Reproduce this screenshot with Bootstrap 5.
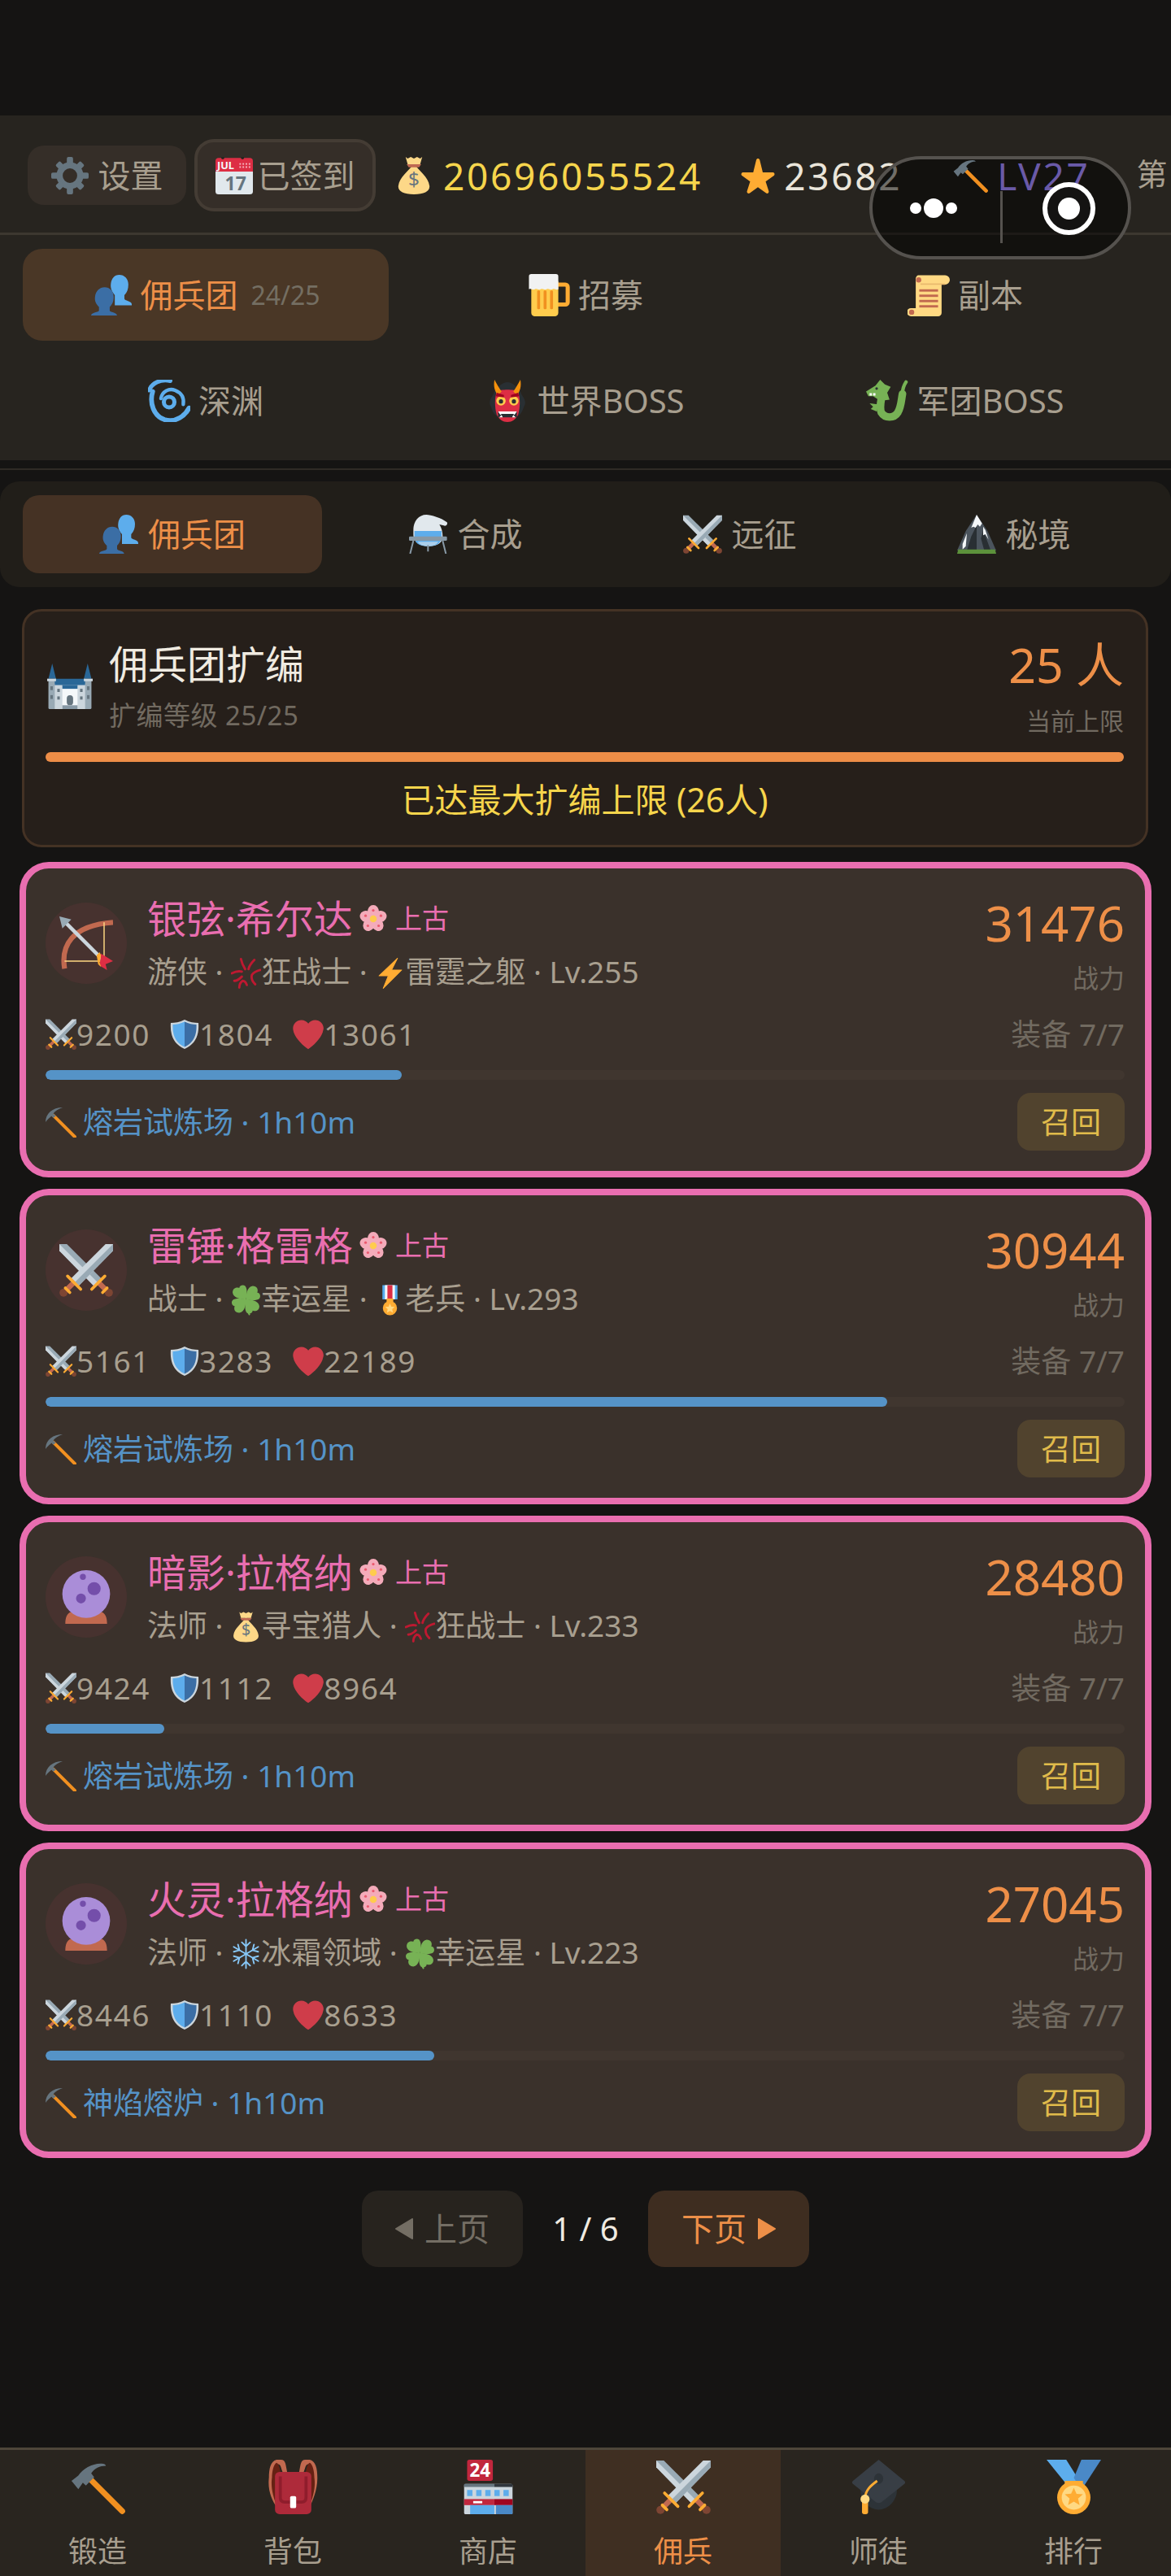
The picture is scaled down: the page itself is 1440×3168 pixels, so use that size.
<!DOCTYPE html>
<html lang="zh-CN">
<head>
  <meta charset="UTF-8">
  <title>佣兵团</title>
  <link href="https://cdn.jsdelivr.net/npm/bootstrap@5.3.3/dist/css/bootstrap.min.css" rel="stylesheet">
  <style>
    html, body { background: #151413; }
    body { width: 1440px; min-height: 3168px; margin: 0; position: relative; overflow-x: hidden; display: flex; flex-direction: column;
      font-family: "Noto Sans", "Noto Sans CJK SC", sans-serif; color: #a89f8f; }
    svg.ico { display: inline-block; flex: none; vertical-align: -0.2em; overflow: visible; }
    text { font-family: "Noto Sans", "Liberation Sans", sans-serif; }

    .game-head { margin-top: 142px; background: #27241f; height: 424px; }
    .top-bar { height: 147px; padding: 3px 0 0 34px; border-bottom: 3px solid #3d3830; white-space: nowrap; }
    .top-btn { height: 73px; width: 195px; background: #352e28; border-radius: 20px; font-size: 40px; line-height: 1; gap: 12px; color: #a89f8f; flex: none; }
    .top-btn.signed { height: 89px; width: 223px; margin-left: 10px; border: 4px solid #443c34; border-radius: 24px; gap: 6px; }
    .res { font-size: 46px; letter-spacing: 2.7px; line-height: 1; flex: none; }
    .res-gold { color: #f6d54c; margin-left: 13px; }
    .res-star { color: #eae5da; margin-left: 10px; }
    .res-lv { color: #6a5aa8; margin-left: 11px; position: relative; z-index: 2; }
    .res-floor { font-size: 38px; margin-left: 57px; line-height: 1; margin-top: -6px; flex: none; }
    .hammer-top { margin-left: 63px; position: relative; z-index: 2; }

    .nav-grid { display: grid; grid-template-columns: repeat(3, 450px); grid-auto-rows: 113px; gap: 17px 17px; padding: 17px 28px; }
    .nav-cell { font-size: 40px; gap: 10px; border-radius: 24px; line-height: 1; }
    .nav-cell.on { background: #4a3726; color: #ed8f48; }
    .nav-cell small { font-size: 32px; color: #746e62; margin-left: 6px; }
    .head-rule { height: 2px; margin-top: 10px; background: #2f2b26; }

    .sub-bar { margin-top: 14px; height: 130px; background: #211e19; border-radius: 24px; padding: 17px 28px; }
    .sub-cell { flex: 0 0 337px; font-size: 40px; gap: 12px; border-radius: 20px; line-height: 1; }
    .sub-cell.on { flex: 0 0 368px; margin-right: 8px; background: #453224; color: #ed8f48; }

    .expand-box { margin: 27px 28px 0 27px; height: 293px; background: #261f1a; border: 3px solid #443224; border-radius: 24px; padding: 35px 27px 0 26px; }
    .expand-title { font-size: 48px; line-height: 60px; color: #f0ebe1; }
    .expand-sub { font-size: 33px; letter-spacing: .5px; line-height: 40px; margin-top: 13px; color: #716a60; }
    .expand-num { font-size: 59px; line-height: 60px; color: #ed8f48; }
    .expand-cap { font-size: 30px; line-height: 26px; margin-top: 27px; color: #716a60; }
    .bar-orange { height: 12px; margin-top: 25px; background: #ed8d47; border-radius: 6px; }
    .expand-note { margin-top: 21px; font-size: 41px; line-height: 50px; color: #f6d54c; }
    .castle-ico { margin-right: 18px; }

    .hero-list { margin: 18px 24px 0; gap: 14px; }
    .hero-box { height: 388px; background: #3a312b; border: 8px solid #e96eb0; border-radius: 36px; padding: 32px 25px 0 24px; }
    .hero-top { height: 120px; }
    .avatar { width: 100px; height: 100px; flex: none; margin-right: 25px; background: #47322f; border-radius: 50%; }
    .hero-name { font-size: 48px; line-height: 60px; color: #e96eb0; white-space: nowrap; }
    .hero-tag { font-size: 33px; margin-left: 10px; }
    .hero-line { font-size: 37px; line-height: 60px; margin-top: 5px; white-space: nowrap; }
    .hero-power { font-size: 60px; line-height: 70px; color: #ed8f48; text-align: right; }
    .hero-power-cap { font-size: 32px; line-height: 40px; margin-top: 13px; color: #716a60; text-align: right; }
    .stat-row { height: 50px; margin-top: 27px; font-size: 37px; letter-spacing: 1.6px; }
    .stat-item { margin-right: 24px; }
    .stat-equip { letter-spacing: 0; font-size: 37px; color: #716a60; }
    .track { height: 12px; margin-top: 19px; background: #40362f; border-radius: 6px; }
    .track .progress-bar { background: #5593c7; border-radius: 6px; }
    .task-row { margin-top: 16px; height: 71px; font-size: 37px; color: #5593c7; }
    .recall { width: 132px; height: 71px; padding: 0; background: #51432e; border: 0; border-radius: 16px; font-size: 37px; color: #e0bb4b; }

    .pager { margin-top: 40px; }
    .page-btn { width: 198px; height: 94px; padding: 0; border: 0; border-radius: 20px; font-size: 40px; gap: 14px; }
    .page-btn.off { background: #27231e; color: #746e64; }
    .page-btn.next { background: #3e2d20; color: #ed8f48; }
    .page-num { width: 154px; text-align: center; font-size: 40px; color: #f0ebe1; }

    .tab-bar { margin-top: auto; height: 158px; background: #29251f; border-top: 3px solid #4e463a; }
    .tab-cell { height: 155px; padding-top: 12px; font-size: 36px; line-height: 50px; }
    .tab-cell svg { margin-bottom: 21px; }
    .tab-cell.on { background: #3f2f22; color: #ed8f48; }

    .capsule { position: absolute; left: 1069px; top: 192px; width: 322px; height: 127px; background: rgba(0,0,0,.52); border: 4px solid #55524e; border-radius: 64px; }
    .cap-dots { position: absolute; left: 46px; top: 50%; transform: translateY(-50%); gap: 3px; z-index: 3; }
    .cap-dots i { display: block; width: 14px; height: 14px; background: #fff; border-radius: 50%; }
    .cap-dots i.big { width: 24px; height: 24px; }
    .cap-sep { position: absolute; left: 157px; top: 39px; width: 3px; height: 64px; background: #55524e; z-index: 3; }
    .cap-ring { position: absolute; left: 209px; top: 28px; width: 65px; height: 65px; border: 6px solid #fff; border-radius: 50%; background: #141312; z-index: 3; }
    .cap-ring::after { content: ""; position: absolute; left: 13px; top: 13px; width: 27px; height: 27px; background: #fff; border-radius: 50%; }
  </style>
</head>
<body>
  <svg class="d-none" xmlns="http://www.w3.org/2000/svg">
    <symbol id="i-gear" viewBox="0 0 36 36"><g fill="#66757f"><path fill-rule="evenodd" d="M18 5a13 13 0 1 0 0 26 13 13 0 0 0 0-26zm0 6a7 7 0 1 1 0 14 7 7 0 0 1 0-14z"/><rect x="15" y="0" width="6" height="7" rx="1.5"/><rect x="15" y="29" width="6" height="7" rx="1.5"/><rect x="0" y="15" width="7" height="6" rx="1.5"/><rect x="29" y="15" width="7" height="6" rx="1.5"/><rect x="15" y="1" width="6" height="7" rx="1.5" transform="rotate(45 18 18)"/><rect x="15" y="1" width="6" height="7" rx="1.5" transform="rotate(135 18 18)"/><rect x="15" y="1" width="6" height="7" rx="1.5" transform="rotate(225 18 18)"/><rect x="15" y="1" width="6" height="7" rx="1.5" transform="rotate(315 18 18)"/></g></symbol>
    <symbol id="i-cal" viewBox="0 0 36 36"><path fill="#e1e8ed" d="M0 12h36v21a3 3 0 0 1-3 3H3a3 3 0 0 1-3-3z"/><path fill="#dd2e44" d="M0 4a3 3 0 0 1 3-3h30a3 3 0 0 1 3 3v10H0z"/><circle cx="26" cy="1" r="1.4" fill="#27241f"/><circle cx="7" cy="1" r="1.4" fill="#27241f"/><text x="1.5" y="12" font-size="10" font-weight="700" fill="#f5f8fa">JUL</text><g fill="#f7b6bf"><rect x="23" y="6" width="1.5" height="1.5"/><rect x="26" y="6" width="1.5" height="1.5"/><rect x="29" y="6" width="1.5" height="1.5"/><rect x="32" y="6" width="1.5" height="1.5"/><rect x="23" y="9" width="1.5" height="1.5"/><rect x="26" y="9" width="1.5" height="1.5"/><rect x="29" y="9" width="1.5" height="1.5"/><rect x="32" y="9" width="1.5" height="1.5"/></g><text x="9" y="32" font-size="18" font-weight="700" fill="#66757f">17</text></symbol>
    <symbol id="i-bag" viewBox="0 0 36 36"><path fill="#fdd888" d="M18 6C13 14 4 19 3 28c-.5 5 5 8 15 8s15.500-3 15-8c-1-9-10-14-15-22z"/><path fill="#bf6952" d="M11 7h14l-2 3H13z"/><path fill="#fdd888" d="M10 0l2 1.500L15 0l3 1.500L21 0l3 1.500L26 0l-2 7H12z"/><text x="18" y="28" text-anchor="middle" font-size="19" fill="#67757f">$</text></symbol>
    <symbol id="i-star" viewBox="0 0 36 36"><path fill="#ffac33" d="M27.300 35.900c-.4 0-.7-.1-1-.3L18 29.600l-8.200 6c-.6.4-1.500.4-2.100 0-.6-.5-.9-1.300-.6-2L10.200 24 2 18c-.6-.4-.9-1.200-.6-2 .2-.7.9-1.200 1.700-1.200h10.200l3.100-12.700c.2-.7.9-1.200 1.700-1.200s1.400.5 1.700 1.200l3.100 12.700H33c.8 0 1.400.5 1.700 1.200.2.700 0 1.500-.6 2l-8.300 6 3.100 9.600c.2.700 0 1.500-.6 2-.3.200-.7.300-1 .3z"/></symbol>
    <symbol id="i-hammer" viewBox="0 0 36 36"><path stroke="#f19020" stroke-width="3.800" stroke-linecap="round" d="M12 12l22 22"/><path fill="#66757f" d="M.5 14L5 10.500C8 6 14 2.500 20 2.600c2-.1 3 .6 3.200 1.400C19 4 16 5.500 13.500 9l2 2.500-5.500 5.500-2-1.800L5 19.500z"/></symbol>
    <symbol id="i-pick" viewBox="0 0 36 36"><path stroke="#f19020" stroke-width="3.800" stroke-linecap="round" d="M9 10l25 25"/><path fill="#66757f" d="M0 18C0 8 8 1 20 1c-5 2-9 4-11 7l3 3-3 2-2-2c-2 2-5 4-7 7z"/></symbol>
    <symbol id="i-busts" viewBox="0 0 36 36"><path fill="#5dadec" d="M25 0c4.500 0 8 3.500 8 8.500 0 4-1 7-3.500 9.500v3c0 2 6.500 2 6.500 5v1H21v-9c-2.500-3-4-6-3.500-10C18 3.500 20.500 0 25 0z"/><path fill="#3b6ea5" d="M12 11c4.500 0 8 3.500 8 8.500 0 4-1 6.500-3.500 9v3c0 2 6.500 1.500 6.500 4.500H0c0-3 7-2.500 7-4.500v-3C4.500 26 3 23.500 3.500 19.500 4 14.500 7.500 11 12 11z"/></symbol>
    <symbol id="i-beer" viewBox="0 0 36 36"><path fill="none" stroke="#ffac33" stroke-width="3.500" d="M24 9h8a2 2 0 0 1 2 2v13a2 2 0 0 1-2 2h-8"/><path fill="#ffcc4d" d="M3 6h23v27a3 3 0 0 1-3 3H6a3 3 0 0 1-3-3z"/><g fill="#f19020"><rect x="8" y="14" width="2.500" height="16" rx="1"/><rect x="13.500" y="14" width="2.500" height="16" rx="1"/><rect x="19" y="14" width="2.500" height="16" rx="1"/></g><path fill="#f1f2f2" d="M1 2a2 2 0 0 1 2-2h21a2 2 0 0 1 2 2v11c-2 1-3-1-5 0s-3-1-5 0-3-1-5 0-3-1-5 0-3-1-5 0z"/></symbol>
    <symbol id="i-scroll" viewBox="0 0 36 36"><path fill="#ffd983" d="M9 1h23a4 4 0 0 1 0 8h-3v24a3 3 0 0 1-3 3H3a3 3 0 0 1 0-7h4V4c0-1 1-3 2-3z"/><circle cx="9.500" cy="5" r="2.200" fill="#c1694f"/><circle cx="3.500" cy="32.500" r="2.200" fill="#c1694f"/><g fill="#c1694f"><rect x="10" y="13" width="16" height="2"/><rect x="10" y="17.500" width="16" height="2"/><rect x="10" y="22" width="16" height="2"/><rect x="10" y="26.500" width="16" height="2"/></g><rect x="11" y="8" width="21" height="1.200" fill="#e9b96e"/></symbol>
    <symbol id="i-swirl" viewBox="0 0 36 36"><g fill="none" stroke="#5dadec" stroke-linecap="round"><circle cx="18" cy="19" r="4.500" stroke-width="3.500"/><path stroke-width="3" d="M11 16c1-6 7-9 12-7 5 2 8 6 7 12"/><path stroke-width="3.500" d="M1 9C3 3 11-1 19 1"/><path stroke-width="4" d="M4 10C1 20 5 31 14 34c10 3 18-4 21-10"/></g></symbol>
    <symbol id="i-oni" viewBox="0 0 36 36"><path fill="#292f33" d="M18 2c4 0 6 3 8 4 3 2 3 5 5 8 2 3 3 6 1 9-1 3-2 6-5 8-3 3-6 5-9 5s-6-2-9-5c-3-2-4-5-5-8-2-3-1-6 1-9 2-3 2-6 5-8 2-1 4-4 8-4z"/><path fill="#dd2e44" d="M9 10c3-2 15-2 18 0 2 5 2 14 0 20-2 4-5 6-9 6s-7-2-9-6c-2-6-2-15 0-20z"/><path fill="#f4900c" d="M7 0c2 4 4 7 6 10l-3 3C7 10 6 5 7 0zm22 0c1 5 0 10-3 13l-3-3c2-3 4-6 6-10z"/><circle cx="12.500" cy="18" r="4" fill="#ffcc4d"/><circle cx="23.500" cy="18" r="4" fill="#ffcc4d"/><circle cx="12.500" cy="18.500" r="1.800" fill="#292f33"/><circle cx="23.500" cy="18.500" r="1.800" fill="#292f33"/><path fill="#a0041e" d="M8 14l7 1v-2L9 11zm20 0l-7 1v-2l6-2z"/><rect x="10" y="27" width="16" height="5" fill="#292f33"/><path fill="#fff" d="M10 27h16l-2 3-1-1H13l-1 1zM11 32l2-2 1 2zm14 0l-2-2-1 2z"/></symbol>
    <symbol id="i-dragon" viewBox="0 0 36 36"><path fill="none" stroke="#77b255" stroke-width="6.500" stroke-linecap="round" d="M14 10c-1 8-3 13-1 18 3 5 11 5 14 0 3-5 3-11 4-16"/><path fill="none" stroke="#77b255" stroke-width="3" stroke-linecap="round" d="M31 12c0-4 1-7 3-10"/><path fill="#77b255" d="M0 10l8-5 4-5 4 4 5 2-3 5 2 6-8 1-6-4H2zM3 20l7 1-1 6-5-2 2-2z"/><circle cx="9" cy="7.500" r="1.100" fill="#292f33"/><path fill="#fff" d="M3 11.500h2v2H3zm3 0h2v2H6z"/></symbol>
    <symbol id="i-flask" viewBox="0 0 36 36"><path fill="#e1e8ed" d="M4 14C4 6 9 0 16 0c4 0 14 3 19 7 1 2-1 4-3 3l-4-1c2 3 3 7 3 11 0 6-5 9-13 9S4 26 4 18z"/><path fill="#5dadec" d="M5 15h25v5c0 6-4 9-12.500 9S5 26 5 20z"/><path fill="#e1e8ed" d="M8 25h19c-2 3-5 4-9.500 4S10 28 8 25z" opacity=".6"/><g stroke="#8899a6" stroke-width="1.500" fill="none"><path d="M4 24L1 36M31 24l3 12M17.500 28v6"/></g><rect x="0" y="20" width="35" height="4" rx="1" fill="#8899a6"/></symbol>
    <symbol id="i-swords" viewBox="0 0 36 36"><path fill="#99aab5" d="M0 .5h5l23 23-5 5L0 5z"/><path fill="#ccd6dd" d="M0 .5l25.500 25.500-2.500 2.500L0 5z"/><path fill="#ccd6dd" d="M36 .5v4.500L13 28.500l-5-5L31 .5z"/><path fill="#99aab5" d="M36 .5L10.500 26 13 28.500 36 5z"/><path stroke="#c1694f" stroke-width="3.500" d="M10 26l-7 7M26 26l7 7"/><circle cx="2.800" cy="33.200" r="2.700" fill="#7d4533"/><circle cx="33.200" cy="33.200" r="2.700" fill="#7d4533"/><path stroke="#ffac33" stroke-width="2" stroke-linecap="round" d="M5.500 22l8.800 8.800M30.500 22l-8.800 8.800M4 30l3 3M32 30l-3 3"/></symbol>
    <symbol id="i-peak" viewBox="0 0 36 36"><path fill="#4b545d" d="M18 0l10 15 8 18H0l8-18z"/><path fill="#292f33" d="M18 10l-5 10-4 13h9zM24 14l-2 8 3 11h6z"/><path fill="#f5f8fa" d="M18 0l5 8-2 3-2-2-2 3-2-1-2 1zM5 27l4-10-1 12-3 3zM24 11l2 3 3 9-3-5-2 1z"/><path fill="#5c913b" d="M1 32h34l1 4H0z"/></symbol>
    <symbol id="i-castle" viewBox="0 0 36 36"><rect x="1" y="13" width="34" height="23" rx="1" fill="#99aab5"/><rect x="6" y="16" width="24" height="20" fill="#ccd6dd"/><path fill="#2a6797" d="M4 0l3 12H1zM32 0l3 12h-6zM6 12h24v5H6z"/><rect x="0" y="12" width="7" height="2" fill="#ccd6dd"/><rect x="29" y="12" width="7" height="2" fill="#ccd6dd"/><rect x="12" y="18" width="12" height="18" fill="#f5f8fa"/><path fill="#2a6797" d="M12 17h12v3H12z"/><rect x="15.500" y="25" width="5" height="8" rx="2.500" fill="#66757f"/><rect x="12" y="33" width="12" height="3" fill="#8899a6"/><g fill="#66757f"><rect x="2.500" y="18" width="2" height="3"/><rect x="2.500" y="25" width="2" height="3"/><rect x="31.500" y="18" width="2" height="3"/><rect x="31.500" y="25" width="2" height="3"/><rect x="8" y="20" width="2" height="2.500"/><rect x="8" y="26" width="2" height="2.500"/><rect x="26" y="20" width="2" height="2.500"/><rect x="26" y="26" width="2" height="2.500"/></g></symbol>
    <symbol id="i-bow" viewBox="0 0 36 36"><path fill="none" stroke="#c1694f" stroke-width="3.400" d="M3.500 35C1 20 8 6 36 4"/><path fill="none" stroke="#ffd983" stroke-width=".8" d="M30 4v26H3.500"/><path stroke="#ccd6dd" stroke-width="2.400" d="M2 2l29 29"/><path fill="#99aab5" d="M0 0l8 2-6 6z"/><path fill="#dd2e44" d="M28 25l8 5-5 2 1 4-5-3z"/><path fill="#ffac33" d="M25 26l2-2 1 2-1 5 1 3-2-2z"/></symbol>
    <symbol id="i-orb" viewBox="0 0 36 36"><path fill="#c1694f" d="M4 36c0-4 1-7 4-8 6 3 14 3 20 0 3 1 4 4 4 8z"/><circle cx="18" cy="16" r="16" fill="#aa8dd8"/><circle cx="15.800" cy="4.500" r="2" fill="#744eaa"/><circle cx="23.300" cy="12.400" r="4.400" fill="#744eaa"/><circle cx="14.500" cy="19" r="3.300" fill="#744eaa"/></symbol>
    <symbol id="i-bloom" viewBox="0 0 36 36"><g fill="#f4abba"><ellipse cx="18" cy="9" rx="7.500" ry="9"/><ellipse cx="18" cy="9" rx="7.500" ry="9" transform="rotate(72 18 18)"/><ellipse cx="18" cy="9" rx="7.500" ry="9" transform="rotate(144 18 18)"/><ellipse cx="18" cy="9" rx="7.500" ry="9" transform="rotate(216 18 18)"/><ellipse cx="18" cy="9" rx="7.500" ry="9" transform="rotate(288 18 18)"/></g><g fill="#ea596e"><circle cx="18" cy="7" r="1.700"/><circle cx="28" cy="14" r="1.700"/><circle cx="25" cy="27" r="1.700"/><circle cx="11" cy="27" r="1.700"/><circle cx="8" cy="14" r="1.700"/></g><circle cx="18" cy="18" r="4.500" fill="#ffcc4d"/></symbol>
    <symbol id="i-anger" viewBox="0 0 36 36"><g fill="none" stroke="#be1931" stroke-width="2.800" stroke-linecap="round"><path d="M12 1c1 5 3 9 5 12M28 2c-3 3-6 7-7 11"/><path d="M1 18c4-2 8-3 12-2M4 27c3 0 6-2 9-5"/><path d="M35 14c-4 1-8 3-10 6-1 4 1 8 4 11"/><path d="M10 35c0-3 1-6 4-8 2 0 4 2 5 5"/></g></symbol>
    <symbol id="i-bolt" viewBox="0 0 36 36"><path fill="#ffac33" stroke="#ffac33" stroke-width="1" stroke-linejoin="round" d="M27 0L5 21h11l-6 15 22-22H20z"/></symbol>
    <symbol id="i-clover" viewBox="0 0 36 36"><path stroke="#77b255" stroke-width="2" stroke-linecap="round" fill="none" d="M18 18c0 7 1 12 4 17"/><g fill="#77b255"><path d="M18 17C13 17 3 16 2 9c0-5 4-7 8-5.500C10 0 15-1 17 1c3 3 2 11 1 16z"/><path d="M18 17C13 17 3 16 2 9c0-5 4-7 8-5.500C10 0 15-1 17 1c3 3 2 11 1 16z" transform="rotate(90 18 17)"/><path d="M18 17C13 17 3 16 2 9c0-5 4-7 8-5.500C10 0 15-1 17 1c3 3 2 11 1 16z" transform="rotate(180 18 17)"/><path d="M18 17C13 17 3 16 2 9c0-5 4-7 8-5.500C10 0 15-1 17 1c3 3 2 11 1 16z" transform="rotate(270 18 17)"/></g></symbol>
    <symbol id="i-service" viewBox="0 0 36 36"><rect x="9" y="0" width="18" height="17" fill="#55acee"/><rect x="12" y="0" width="12" height="17" fill="#f5f8fa"/><rect x="15" y="0" width="6" height="17" fill="#dd2e44"/><rect x="14" y="16" width="8" height="5" fill="#ffac33"/><circle cx="18" cy="27.500" r="8.500" fill="#ffac33"/><path fill="#ffd983" d="M18 22l1.700 3.700 4 .4-3 2.700.9 4-3.600-2-3.600 2 .9-4-3-2.700 4-.4z"/></symbol>
    <symbol id="i-snow" viewBox="0 0 36 36"><g fill="none" stroke="#88c9f9" stroke-width="1.800" stroke-linecap="round"><path d="M18 1v34M13 4l5 5 5-5M13 32l5-5 5 5"/><g transform="rotate(60 18 18)"><path d="M18 1v34M13 4l5 5 5-5M13 32l5-5 5 5"/></g><g transform="rotate(120 18 18)"><path d="M18 1v34M13 4l5 5 5-5M13 32l5-5 5 5"/></g></g></symbol>
    <symbol id="i-shield" viewBox="0 0 36 36"><path fill="#ccd6dd" d="M18 0C12 3 6 4 1 4c-1 14 3 26 17 32 14-6 18-18 17-32-5 0-11-1-17-4z"/><path fill="#5dadec" d="M18 2.500C13 5 8 6 3.500 6 3 18 6 28 18 33.500z"/><path fill="#3b6ea5" d="M18 2.500C23 5 28 6 32.500 6 33 18 30 28 18 33.500z"/></symbol>
    <symbol id="i-heart" viewBox="0 0 36 36"><path fill="#cf3d4a" d="M35.900 11.200c0-5.400-4.400-9.800-9.800-9.800-3.300 0-6.200 1.600-8 4.100-1.800-2.500-4.700-4.100-8-4.100C4.700 1.400.3 5.800.3 11.200c0 .8.100 1.500.3 2.200C2 21.900 11.500 30.900 18 35.300c6.500-4.400 16-13.400 17.400-21.900.2-.7.5-1.400.5-2.200"/></symbol>
    <symbol id="i-pack" viewBox="0 0 36 36"><path fill="#c1694f" d="M2 12c0-6 1-11 5-12h3c3 0 3 3 4 8h-3c-1-2-1-5-3-5-2 1-2 6-2 11 0 6 1 11 3 15l-2 2C4 27 1 20 2 12zM34 12c0-6-1-11-5-12h-3c-3 0-3 3-4 8h3c1-2 1-5 3-5 2 1 2 6 2 11 0 6-1 11-3 15l2 2c2-4 5-11 5-19z"/><path fill="#662113" d="M4 12c0-4 1-9 3-10 2 1 2 4 3 7h-2c-1 5-2 12 0 20l-1 1C5 25 3 18 4 12zm28 0c0-4-1-9-3-10-2 1-2 4-3 7h2c1 5 2 12 0 20l1 1c2-5 4-12 3-18z"/><rect x="6" y="8" width="24" height="28" rx="3" fill="#ae2a3a"/><path fill="none" stroke="#8f1d2c" stroke-width="2" d="M9.500 11v14c0 2 1 3 3 3h11c2 0 3-1 3-3V11"/><rect x="16" y="24" width="4" height="8" rx="1" fill="#fff"/></symbol>
    <symbol id="i-shop" viewBox="0 0 36 36"><rect x="2" y="16" width="32" height="20" rx="1" fill="#ccd6dd"/><rect x="2" y="16" width="20" height="2" fill="#66757f"/><rect x="22" y="16" width="12" height="2" fill="#31373d"/><g fill="#5dadec"><rect x="4" y="20" width="3.500" height="4"/><rect x="10" y="20" width="3.500" height="4"/><rect x="16" y="20" width="3.500" height="4"/><rect x="22" y="20" width="3.500" height="4"/><rect x="28" y="20" width="3.500" height="4"/></g><rect x="2" y="26" width="20" height="4" fill="#c1273d"/><rect x="22" y="26" width="12" height="4" fill="#a0041e"/><rect x="8" y="27.300" width="6" height="1.500" fill="#fff"/><rect x="6" y="30" width="16" height="6" fill="#5dadec"/><rect x="23" y="30" width="11" height="6" fill="#4a89c7"/><rect x="4" y="0" width="17" height="14" rx="1.500" fill="#c1273d"/><text x="12.500" y="11.500" text-anchor="middle" font-size="12" font-weight="700" fill="#fff">24</text></symbol>
    <symbol id="i-cap" viewBox="0 0 36 36"><path fill="#2d3338" d="M6 18h24v6c0 5-5 12-12 12S6 29 6 24z" transform="translate(0 -3)"/><path fill="#383e45" d="M18 0l17 14c.7.6.7 1.500 0 2L20 28c-1 .8-3 .8-4 0L1 16c-.7-.5-.7-1.400 0-2z"/><ellipse cx="18" cy="12.500" rx="3" ry="3.500" fill="#2d3338"/><path fill="none" stroke="#ffac33" stroke-width="1.600" d="M17 14c-4 3-8 6-8 12"/><rect x="7" y="25" width="4" height="11" rx="1.500" fill="#ffac33"/><circle cx="9" cy="26" r="3" fill="#ffd983"/></symbol>
    <symbol id="i-medal" viewBox="0 0 36 36"><path fill="#5dadec" d="M0 0h13l10 16-6 5z"/><path fill="#4a89c7" d="M36 0H23l-5 12 5 8z"/><rect x="12" y="14" width="12" height="6" fill="#ffac33"/><ellipse cx="18" cy="25" rx="11" ry="11" fill="#ffac33"/><ellipse cx="18" cy="25" rx="8" ry="8" fill="#ffd983"/><path fill="#ffac33" d="M18 18.500l1.800 4 4.200.4-3.200 2.800 1 4.200-3.800-2.200-3.800 2.200 1-4.200-3.200-2.800 4.200-.4z"/></symbol>
  </svg>

  <header class="game-head">
    <div class="top-bar d-flex align-items-center">
      <div class="top-btn d-flex align-items-center justify-content-center"><svg class="ico" width="46" height="46"><use href="#i-gear"/></svg>设置</div>
      <div class="top-btn signed d-flex align-items-center justify-content-center"><svg class="ico" width="46" height="46"><use href="#i-cal"/></svg>已签到</div>
      <svg class="ico ms-4" width="46" height="48"><use href="#i-bag"/></svg>
      <span class="res res-gold">20696055524</span>
      <svg class="ico" style="margin-left:46px" width="44" height="44"><use href="#i-star"/></svg>
      <span class="res res-star">23682</span>
      <svg class="ico hammer-top" width="43" height="43"><use href="#i-hammer"/></svg>
      <span class="res res-lv">LV27</span>
      <span class="res-floor">第</span>
    </div>
    <div class="nav-grid">
      <div class="nav-cell on d-flex align-items-center justify-content-center"><svg class="ico" width="50" height="50"><use href="#i-busts"/></svg>佣兵团<small>24/25</small></div>
      <div class="nav-cell d-flex align-items-center justify-content-center"><svg class="ico" width="52" height="52"><use href="#i-beer"/></svg>招募</div>
      <div class="nav-cell d-flex align-items-center justify-content-center"><svg class="ico" width="52" height="52"><use href="#i-scroll"/></svg>副本</div>
      <div class="nav-cell d-flex align-items-center justify-content-center"><svg class="ico" width="52" height="52"><use href="#i-swirl"/></svg>深渊</div>
      <div class="nav-cell d-flex align-items-center justify-content-center"><svg class="ico" width="52" height="52"><use href="#i-oni"/></svg>世界BOSS</div>
      <div class="nav-cell d-flex align-items-center justify-content-center"><svg class="ico" width="52" height="52"><use href="#i-dragon"/></svg>军团BOSS</div>
    </div>
  </header>
  <div class="head-rule"></div>

  <div class="sub-bar d-flex">
    <div class="sub-cell on d-flex align-items-center justify-content-center"><svg class="ico" width="48" height="48"><use href="#i-busts"/></svg>佣兵团</div>
    <div class="sub-cell d-flex align-items-center justify-content-center"><svg class="ico" width="48" height="48"><use href="#i-flask"/></svg>合成</div>
    <div class="sub-cell d-flex align-items-center justify-content-center"><svg class="ico" width="48" height="48"><use href="#i-swords"/></svg>远征</div>
    <div class="sub-cell d-flex align-items-center justify-content-center"><svg class="ico" width="48" height="48"><use href="#i-peak"/></svg>秘境</div>
  </div>

  <section class="expand-box">
    <div class="d-flex align-items-start justify-content-between">
      <div class="d-flex align-items-center">
        <svg class="ico castle-ico" width="60" height="56"><use href="#i-castle"/></svg>
        <div>
          <div class="expand-title">佣兵团扩编</div>
          <div class="expand-sub">扩编等级 25/25</div>
        </div>
      </div>
      <div class="text-end">
        <div class="expand-num">25 人</div>
        <div class="expand-cap">当前上限</div>
      </div>
    </div>
    <div class="bar-orange"></div>
    <div class="expand-note text-center">已达最大扩编上限 (26人)</div>
  </section>

  <main class="hero-list d-flex flex-column">
    <article class="hero-box">
      <div class="hero-top d-flex align-items-center">
        <div class="avatar d-flex align-items-center justify-content-center"><svg class="ico" width="66" height="66"><use href="#i-bow"/></svg></div>
        <div class="flex-grow-1 align-self-start">
          <div class="hero-name d-flex align-items-center">银弦·希尔达<svg class="ico ms-2" width="34" height="34"><use href="#i-bloom"/></svg><span class="hero-tag">上古</span></div>
          <div class="hero-line">游侠 · <svg class="ico" width="37" height="38"><use href="#i-anger"/></svg>狂战士 · <svg class="ico" width="37" height="38"><use href="#i-bolt"/></svg>雷霆之躯 · Lv.255</div>
        </div>
        <div class="align-self-start">
          <div class="hero-power">31476</div>
          <div class="hero-power-cap">战力</div>
        </div>
      </div>
      <div class="stat-row d-flex align-items-center">
        <span class="stat-item d-flex align-items-center"><svg class="ico" width="38" height="38"><use href="#i-swords"/></svg>9200</span>
        <span class="stat-item d-flex align-items-center"><svg class="ico" width="36" height="38"><use href="#i-shield"/></svg>1804</span>
        <span class="stat-item d-flex align-items-center"><svg class="ico" width="38" height="38"><use href="#i-heart"/></svg>13061</span>
        <span class="stat-equip ms-auto">装备 7/7</span>
      </div>
      <div class="progress track"><div class="progress-bar" style="width:33%"></div></div>
      <div class="task-row d-flex align-items-center justify-content-between">
        <span class="d-flex align-items-center"><svg class="ico me-2" width="38" height="38"><use href="#i-pick"/></svg>熔岩试炼场 · 1h10m</span>
        <button class="btn recall" type="button">召回</button>
      </div>
    </article>

    <article class="hero-box">
      <div class="hero-top d-flex align-items-center">
        <div class="avatar d-flex align-items-center justify-content-center"><svg class="ico" width="66" height="66"><use href="#i-swords"/></svg></div>
        <div class="flex-grow-1 align-self-start">
          <div class="hero-name d-flex align-items-center">雷锤·格雷格<svg class="ico ms-2" width="34" height="34"><use href="#i-bloom"/></svg><span class="hero-tag">上古</span></div>
          <div class="hero-line">战士 · <svg class="ico" width="37" height="38"><use href="#i-clover"/></svg>幸运星 · <svg class="ico" width="37" height="38"><use href="#i-service"/></svg>老兵 · Lv.293</div>
        </div>
        <div class="align-self-start">
          <div class="hero-power">30944</div>
          <div class="hero-power-cap">战力</div>
        </div>
      </div>
      <div class="stat-row d-flex align-items-center">
        <span class="stat-item d-flex align-items-center"><svg class="ico" width="38" height="38"><use href="#i-swords"/></svg>5161</span>
        <span class="stat-item d-flex align-items-center"><svg class="ico" width="36" height="38"><use href="#i-shield"/></svg>3283</span>
        <span class="stat-item d-flex align-items-center"><svg class="ico" width="38" height="38"><use href="#i-heart"/></svg>22189</span>
        <span class="stat-equip ms-auto">装备 7/7</span>
      </div>
      <div class="progress track"><div class="progress-bar" style="width:78%"></div></div>
      <div class="task-row d-flex align-items-center justify-content-between">
        <span class="d-flex align-items-center"><svg class="ico me-2" width="38" height="38"><use href="#i-pick"/></svg>熔岩试炼场 · 1h10m</span>
        <button class="btn recall" type="button">召回</button>
      </div>
    </article>

    <article class="hero-box">
      <div class="hero-top d-flex align-items-center">
        <div class="avatar d-flex align-items-center justify-content-center"><svg class="ico" width="66" height="66"><use href="#i-orb"/></svg></div>
        <div class="flex-grow-1 align-self-start">
          <div class="hero-name d-flex align-items-center">暗影·拉格纳<svg class="ico ms-2" width="34" height="34"><use href="#i-bloom"/></svg><span class="hero-tag">上古</span></div>
          <div class="hero-line">法师 · <svg class="ico" width="37" height="38"><use href="#i-bag"/></svg>寻宝猎人 · <svg class="ico" width="37" height="38"><use href="#i-anger"/></svg>狂战士 · Lv.233</div>
        </div>
        <div class="align-self-start">
          <div class="hero-power">28480</div>
          <div class="hero-power-cap">战力</div>
        </div>
      </div>
      <div class="stat-row d-flex align-items-center">
        <span class="stat-item d-flex align-items-center"><svg class="ico" width="38" height="38"><use href="#i-swords"/></svg>9424</span>
        <span class="stat-item d-flex align-items-center"><svg class="ico" width="36" height="38"><use href="#i-shield"/></svg>1112</span>
        <span class="stat-item d-flex align-items-center"><svg class="ico" width="38" height="38"><use href="#i-heart"/></svg>8964</span>
        <span class="stat-equip ms-auto">装备 7/7</span>
      </div>
      <div class="progress track"><div class="progress-bar" style="width:11%"></div></div>
      <div class="task-row d-flex align-items-center justify-content-between">
        <span class="d-flex align-items-center"><svg class="ico me-2" width="38" height="38"><use href="#i-pick"/></svg>熔岩试炼场 · 1h10m</span>
        <button class="btn recall" type="button">召回</button>
      </div>
    </article>

    <article class="hero-box">
      <div class="hero-top d-flex align-items-center">
        <div class="avatar d-flex align-items-center justify-content-center"><svg class="ico" width="66" height="66"><use href="#i-orb"/></svg></div>
        <div class="flex-grow-1 align-self-start">
          <div class="hero-name d-flex align-items-center">火灵·拉格纳<svg class="ico ms-2" width="34" height="34"><use href="#i-bloom"/></svg><span class="hero-tag">上古</span></div>
          <div class="hero-line">法师 · <svg class="ico" width="37" height="38"><use href="#i-snow"/></svg>冰霜领域 · <svg class="ico" width="37" height="38"><use href="#i-clover"/></svg>幸运星 · Lv.223</div>
        </div>
        <div class="align-self-start">
          <div class="hero-power">27045</div>
          <div class="hero-power-cap">战力</div>
        </div>
      </div>
      <div class="stat-row d-flex align-items-center">
        <span class="stat-item d-flex align-items-center"><svg class="ico" width="38" height="38"><use href="#i-swords"/></svg>8446</span>
        <span class="stat-item d-flex align-items-center"><svg class="ico" width="36" height="38"><use href="#i-shield"/></svg>1110</span>
        <span class="stat-item d-flex align-items-center"><svg class="ico" width="38" height="38"><use href="#i-heart"/></svg>8633</span>
        <span class="stat-equip ms-auto">装备 7/7</span>
      </div>
      <div class="progress track"><div class="progress-bar" style="width:36%"></div></div>
      <div class="task-row d-flex align-items-center justify-content-between">
        <span class="d-flex align-items-center"><svg class="ico me-2" width="38" height="38"><use href="#i-pick"/></svg>神焰熔炉 · 1h10m</span>
        <button class="btn recall" type="button">召回</button>
      </div>
    </article>
  </main>

  <div class="pager d-flex justify-content-center align-items-center">
    <button class="btn page-btn off d-flex align-items-center justify-content-center" type="button"><svg width="22" height="26" viewBox="0 0 22 26"><path fill="#746e64" stroke="#746e64" stroke-width="2" stroke-linejoin="round" d="M21 1v24L1 13z"/></svg>上页</button>
    <span class="page-num">1 / 6</span>
    <button class="btn page-btn next d-flex align-items-center justify-content-center" type="button">下页<svg width="22" height="26" viewBox="0 0 22 26"><path fill="#ed8f48" stroke="#ed8f48" stroke-width="2" stroke-linejoin="round" d="M1 1v24l20-12z"/></svg></button>
  </div>

  <nav class="tab-bar row g-0">
    <div class="col-2 tab-cell d-flex flex-column align-items-center"><svg class="ico" width="67" height="67"><use href="#i-hammer"/></svg>锻造</div>
    <div class="col-2 tab-cell d-flex flex-column align-items-center"><svg class="ico" width="67" height="67"><use href="#i-pack"/></svg>背包</div>
    <div class="col-2 tab-cell d-flex flex-column align-items-center"><svg class="ico" width="67" height="67"><use href="#i-shop"/></svg>商店</div>
    <div class="col-2 tab-cell on d-flex flex-column align-items-center"><svg class="ico" width="67" height="67"><use href="#i-swords"/></svg>佣兵</div>
    <div class="col-2 tab-cell d-flex flex-column align-items-center"><svg class="ico" width="67" height="67"><use href="#i-cap"/></svg>师徒</div>
    <div class="col-2 tab-cell d-flex flex-column align-items-center"><svg class="ico" width="67" height="67"><use href="#i-medal"/></svg>排行</div>
  </nav>

  <div class="capsule">
    <div class="cap-dots d-flex align-items-center"><i></i><i class="big"></i><i></i></div>
    <div class="cap-sep"></div>
    <div class="cap-ring"></div>
  </div>

  <script src="https://cdn.jsdelivr.net/npm/bootstrap@5.3.3/dist/js/bootstrap.bundle.min.js"></script>
</body>
</html>
